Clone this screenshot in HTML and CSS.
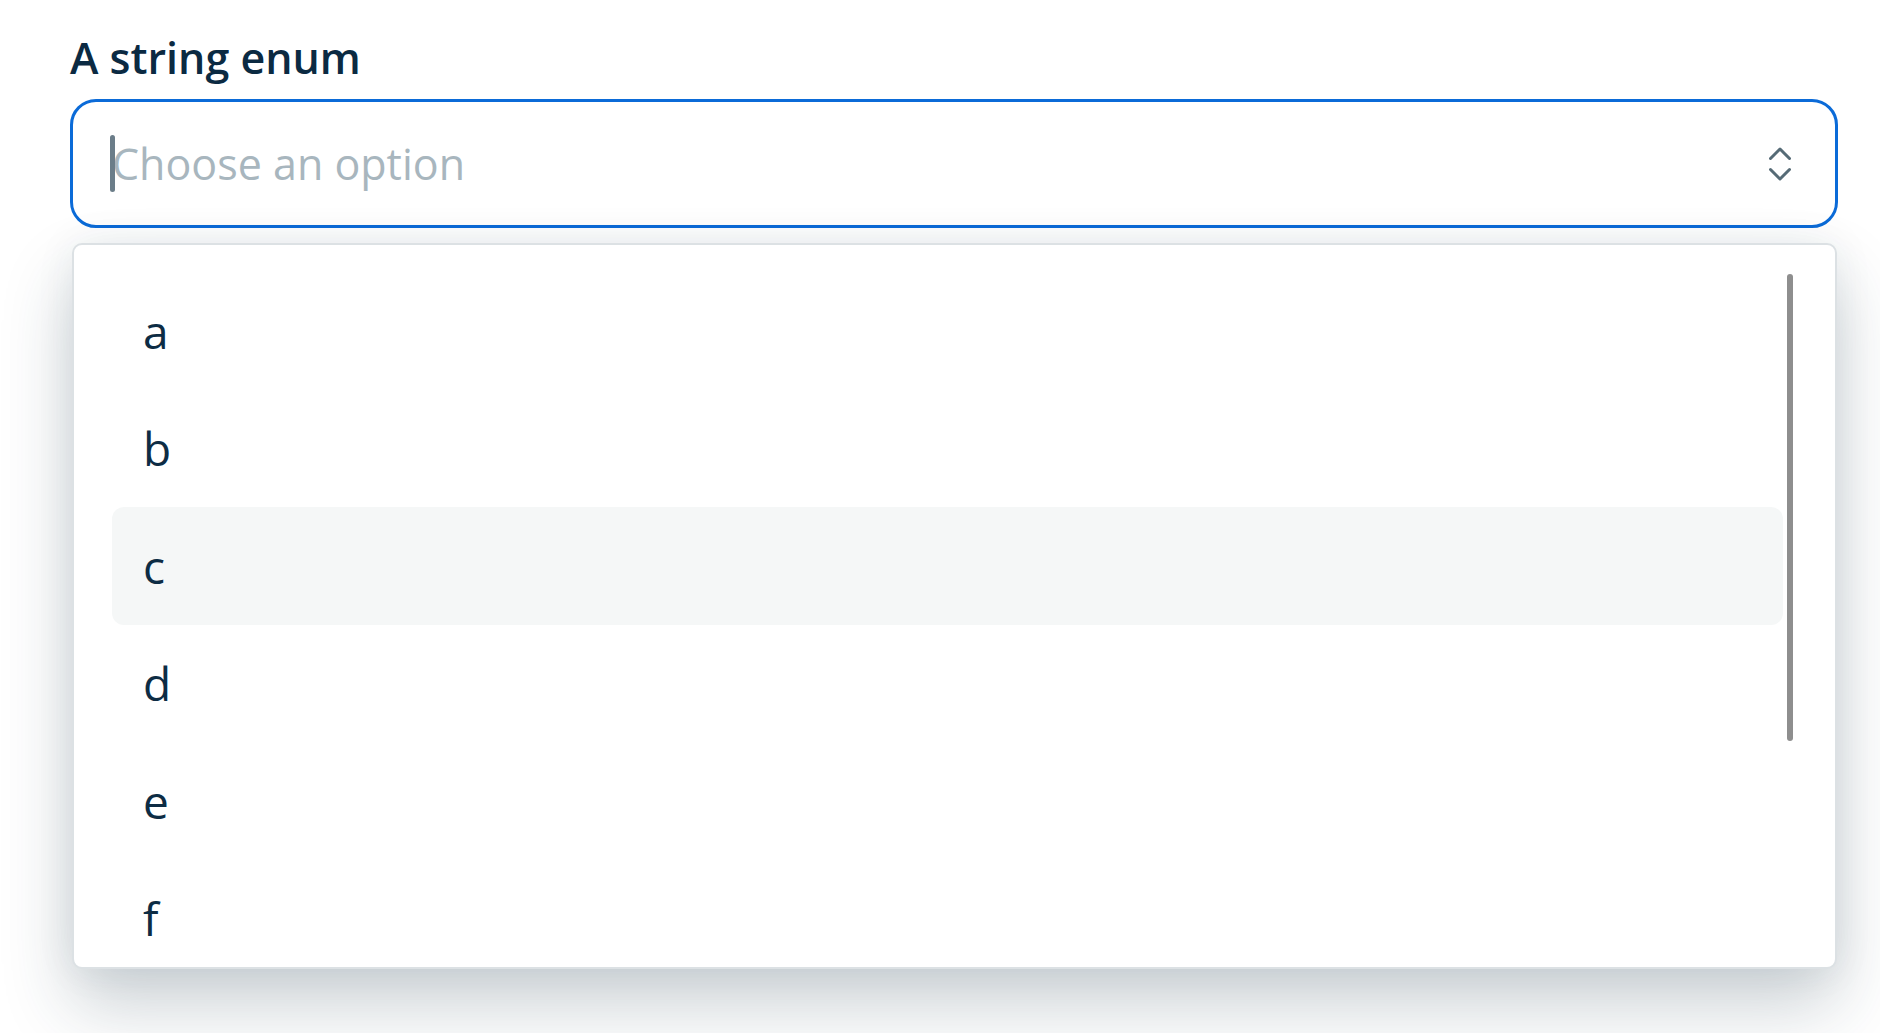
FILE: index.html
```html
<html>
   <head>
      <meta charset="utf-8">
      <link rel="stylesheet" href="styles.css">
   </head>
   <body>
      <div class="field">
         <div class="fieldLabel">A string enum</div>
         <div class="selectBox">
            <span class="caret"></span>
            <span class="placeholder">Choose an option</span>
            <svg class="chevrons" width="22" height="36" viewBox="0 0 22 36">
               <polyline points="1.5,12.5 11,3 20.5,12.5" />
               <polyline points="1.5,23.5 11,33 20.5,23.5" />
            </svg>
         </div>
         <div class="menu">
            <div class="option">a</div>
            <div class="option">b</div>
            <div class="option active">c</div>
            <div class="option">d</div>
            <div class="option">e</div>
            <div class="option">f</div>
            <div class="scrollThumb"></div>
         </div>
      </div>
   </body>
</html>
```

FILE: styles.css
```css
body {
margin: 0;
background-color: #ffffff;
font-family: "Open Sans", "Noto Sans", sans-serif;
overflow: hidden;
}
.field {
padding: 30px 42px 0 70px;
}
.fieldLabel {
font-size: 43px;
font-weight: 600;
line-height: 56px;
color: #0b2a42;
margin-bottom: 13px;
}
.selectBox {
position: relative;
display: flex;
align-items: center;
box-sizing: border-box;
height: 129px;
padding: 0 44px 0 39px;
border: 3px solid #0b6bd8;
border-radius: 26px;
background-color: #ffffff;
}
.caret {
position: absolute;
left: 37px;
top: 33px;
width: 5px;
height: 57px;
border-radius: 3px;
background-color: #6b7d89;
}
.placeholder {
flex: 1;
font-size: 43px;
color: #a8b6be;
}
.chevrons polyline {
fill: none;
stroke: #566b76;
stroke-width: 3;
stroke-linecap: round;
stroke-linejoin: round;
}
.menu {
position: relative;
box-sizing: border-box;
height: 726px;
margin: 15px 1px 0 2px;
padding: 27px 52px 0 38px;
border: 2px solid #dce1e4;
border-radius: 10px;
background-color: #ffffff;
overflow: hidden;
box-shadow: 0 36px 70px rgba(30, 55, 75, 0.23), 0 0 40px rgba(30, 55, 75, 0.07);
}
.option {
display: flex;
align-items: center;
height: 117.5px;
padding-left: 31px;
font-size: 46px;
color: #0d2c44;
border-radius: 12px;
}
.option.active {
background-color: #f5f7f7;
}
.scrollThumb {
position: absolute;
top: 29px;
right: 42px;
width: 6px;
height: 467px;
border-radius: 3px;
background-color: #8e8e8e;
}
```
